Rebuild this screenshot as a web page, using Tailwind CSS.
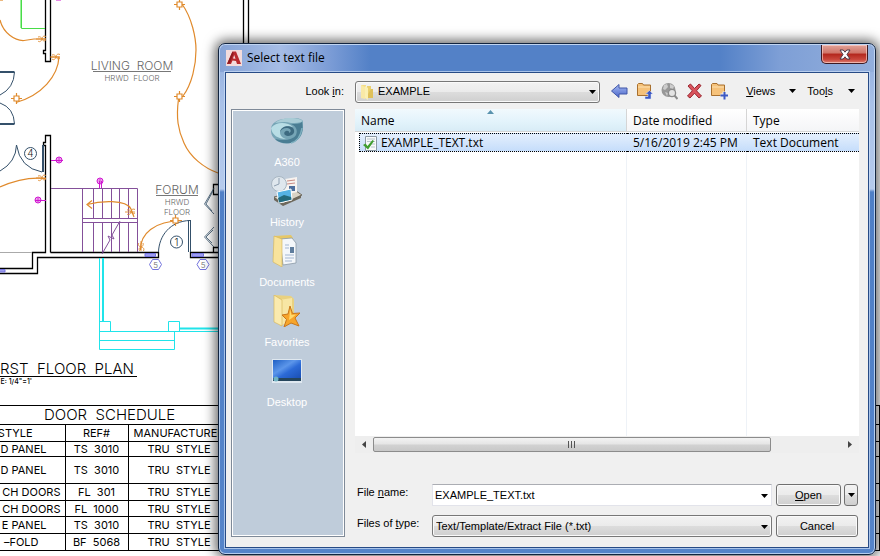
<!DOCTYPE html>
<html lang="en">
<head>
<meta charset="utf-8">
<title>Select text file</title>
<script src="https://cdn.jsdelivr.net/npm/@tailwindcss/browser@4"></script>
</head>
<body class="bg-white">
<div class="relative min-h-screen overflow-hidden">

  <!-- Drawing behind the dialog -->
  <main class="font-['Inter',sans-serif] font-light text-black">
    <svg class="block h-[405px] w-[880px] max-w-none" viewBox="0 0 880 405" fill="none" stroke-width="1" role="img" aria-label="First floor plan">
      <defs>
        <g id="lamp"><path d="M-2.500-2.500H2.500V2.500H-2.500Z" fill="#fff"/><path d="M-5.500 0H-2.500M2.500 0H5.500M0-5.500V-2.500M0 2.500V5.500"/></g>
        <g id="sw"><path d="M4-2.500C1-4 0-1 0 0S-2 4-4 2M-4-2C-2-3 0-1 0 0S2 3 4 1M-6 0H4" stroke-width=".9"/></g>
        <g id="outlet"><circle r="3"/><path d="M-3-1H3M-3 1H3M0-3V3" stroke-width=".8"/></g>
      </defs>
      <!-- walls -->
      <g stroke="#000" stroke-width="1.300">
        <path d="M45.500 0V50.500H43.500V53.500H45.500V61.500H50.500V0"/>
        <path d="M243.500 0V44M248.500 0V44"/>
        <path d="M50.500 252.500V135.500H45.500V142.500H43.500V145.500H45.500V252.500H32.500V268.500H0M50.500 252.500H158.500V257.500H37.500V273.500H0M218 252.500H190.500V257.500H218"/>
        <path d="M218 184.500H213.500V194.500H218M213.500 252V247.500H218"/>
      </g>
      <path d="M0 252.500H32" stroke="#aaa"/>
      <!-- windows and tags -->
      <g stroke="#7373dd">
        <path d="M145 253.500H155.500V256.500H145ZM192 253.500H203.500V256.500H192ZM0 269.500H5V272H0" fill="#9d9df0"/>
        <path d="M149.500 264.500L152.500 259.500H158.500L161.500 264.500L158.500 269.500H152.500ZM197 264.500L200 259.500H206L209 264.500L206 269.500H200Z"/>
      </g>
      <!-- furniture -->
      <path d="M21.500 0V28.500H45" stroke="#48dc48"/><path d="M20.500 0V28" stroke="#9df09d"/>
      <!-- doors -->
      <g stroke="#34506a">
        <path d="M0 72H14.500M0 124H14.500" stroke-width="1.800"/>
        <path d="M14.500 72Q14 88 0 95M0 103Q14 108 14.500 124M16.500 145Q16 162 0 171M16.500 145Q20 168 42 172M43.500 145V172"/>
        <path d="M42.500 145V172M158.500 252C159 236 170 221 190 220.500M188.500 220V252M190.500 220V252"/>
        <path d="M214 188L204.500 204L214 214M214 227L204.500 237L214 247M213 191L206 204L212 211M213 230L206 237L212 243" stroke-width=".8"/>
        <circle cx="30.500" cy="153.500" r="6"/><circle cx="176.500" cy="242" r="6"/>
      </g>
      <!-- stairs -->
      <path d="M51 188.500H137.500V252M82.500 188V252M93.500 188V218M93.500 222V252M102.500 188V218M102.500 222V252M111.500 188V218M111.500 222V252M119.500 188V218M119.500 222V252M128.500 188V218M128.500 222V252M82 218.500H137M82 222.500H137M102 254L110 240L108 236L114 239L112 235L120 221" stroke="#84509a"/>
      <!-- outlets -->
      <g stroke="#d016d0">
        <use href="#outlet" x="59" y="160"/><path d="M51 160.500H63"/>
        <use href="#outlet" x="38" y="200"/><path d="M35 200.500H46"/>
        <use href="#outlet" x="100" y="181"/><path d="M99.500 181V188M101.500 181V188"/>
        <path d="M56 0H61"/>
      </g>
      <!-- wiring -->
      <g stroke="#e08a2c" stroke-width="1.200">
        <path d="M0 20C3 33 15 41 24 40.500L34 39H46M51 57H59C58 76 42 95 16 102.500"/>
        <path d="M0 187Q24 176 46 178.500M182 4C192 18 196 38 196 50C196 65 192 84 183 96"/>
        <path d="M178.500 99C176 118 178 130 184 143C190 157 204 168 218 173"/>
        <path d="M92 200.500L87 204.500L92 208.500M87 204.500C100 201 126 199 131 209L134 217M140.500 250C140 234 154 221 182 220.500"/>
        <use href="#sw" x="42" y="39"/><use href="#sw" x="56" y="57"/><use href="#sw" x="42" y="178"/>
        <use href="#sw" x="131" y="212"/><use href="#sw" x="0" y="0" transform="translate(141 247) rotate(90)"/>
        <use href="#lamp" x="16.500" y="98.500"/><use href="#lamp" x="179.500" y="4.500"/><use href="#lamp" x="179.500" y="96.500"/><use href="#lamp" x="175.500" y="220.500"/>
        <path d="M0 0H3"/>
      </g>
      <!-- porch -->
      <g stroke="#20e4ea">
        <path d="M99.500 258V349.500H174.500V331M99 331.500H218M99 340.500H174M99.500 321.500H110.500V331M168.500 331V321.500H179.500V331"/>
        <path d="M103 258V321M180 328.500H218" stroke-width="2"/>
      </g>
      <g fill="#666" font-size="12" text-anchor="middle">
        <text x="132" y="70">LIVING&#160; ROOM</text><text x="132" y="81" font-size="8">HRWD&#160; FLOOR</text>
        <text x="177" y="194">FORUM</text><text x="177" y="205" font-size="8">HRWD</text><text x="177" y="215" font-size="8">FLOOR</text>
        <g fill="#222"><text x="30.500" y="157" font-size="10">4</text><text x="176.500" y="246" font-size="10">1</text></g>
        <g font-size="8"><text x="155.500" y="268">5</text><text x="203" y="268">5</text></g>
      </g>
      <path d="M93 71.500H171M156 195.500H198" stroke="#777"/>
      <g fill="#000">
        <text x="134" y="374" font-size="15" text-anchor="end">RST&#160; FLOOR&#160; PLAN</text>
        <text x="32" y="384" font-size="7" font-weight="500" text-anchor="end">E: 1/4"=1'</text>
      </g>
      <path d="M0 376.500H137" stroke="#000"/>
    </svg>

    <table class="w-full table-fixed border-collapse text-center text-[11px] leading-[14px] font-normal whitespace-nowrap [&_td]:border [&_td]:border-black [&_td]:p-0 [&_th]:border [&_th]:border-black [&_th]:p-0 [&_th]:font-normal [&_tr>*:first-child]:border-l-0">
      <colgroup><col class="w-[65px]"><col class="w-[63px]"><col class="w-[102px]"><col></colgroup>
      <thead>
        <tr class="h-[19px]"><th colspan="4" class="text-left"><span class="pl-[44px] text-[15px] font-light">DOOR&nbsp; SCHEDULE</span></th></tr>
        <tr class="h-[17px]"><th><div class="flex justify-end pr-[32px]">STYLE</div></th><th>REF#</th><th>MANUFACTURER</th><th></th></tr>
      </thead>
      <tbody>
        <tr class="h-[15px]"><td><div class="flex justify-end pr-[18px]">D PANEL</div></td><td>TS&nbsp; 3010</td><td>TRU&nbsp; STYLE</td><td></td></tr>
        <tr class="h-[27px]"><td><div class="flex justify-end pr-[18px]">D PANEL</div></td><td>TS&nbsp; 3010</td><td>TRU&nbsp; STYLE</td><td></td></tr>
        <tr class="h-[17px]"><td><div class="flex justify-end pr-[4px]">CH DOORS</div></td><td>FL&nbsp; 301</td><td>TRU&nbsp; STYLE</td><td></td></tr>
        <tr class="h-[16px]"><td><div class="flex justify-end pr-[4px]">CH DOORS</div></td><td>FL&nbsp; 1000</td><td>TRU&nbsp; STYLE</td><td></td></tr>
        <tr class="h-[17px]"><td><div class="flex justify-end pr-[18px]">E PANEL</div></td><td>TS&nbsp; 3010</td><td>TRU&nbsp; STYLE</td><td></td></tr>
        <tr class="h-[17px]"><td><div class="flex justify-end pr-[26px]">–FOLD</div></td><td>BF&nbsp; 5068</td><td>TRU&nbsp; STYLE</td><td></td></tr>
      </tbody>
    </table>
  </main>

  <!-- Dialog window -->
  <section role="dialog" aria-labelledby="dialog-title" class="absolute top-[43px] right-[4px] bottom-px left-[218px] flex flex-col rounded-[7px] border border-[#12243f] bg-[linear-gradient(180deg,#8eabdc_0,#a9c1e8_60px,#b5caec_145px,#4f7fc6_148px,#5584c9_100%)] px-[6px] pb-[6px] font-['Liberation_Sans',sans-serif] text-[11px] leading-4 text-black shadow-[0_0_12px_3px_rgba(0,0,0,0.6),inset_0_0_0_1px_rgba(205,224,248,0.8)]">
    <header class="-mx-[5px] mt-px flex h-[27px] shrink-0 items-start rounded-t-[6px] bg-[linear-gradient(90deg,#86a3d6_0,#a6bde6_60px,#7b9cd6_110px,#5381c7_150px,#5381c7_500px,#7e9fd6_560px,#93afdc_100%)] pl-[6px]">
      <svg class="mt-[5px] size-4" viewBox="0 0 16 16" aria-hidden="true"><rect width="16" height="16" fill="#f3dcdc"/><path d="M1 14L6.500 1.500H10L15 14H11L10 11L6.500 10.500L5 14Z" fill="#b92a2e"/><path d="M7 8.500L8.200 5L9.500 8.800Z" fill="#f6dede"/><path d="M1 14L6.500 1.500L7.500 3.500L4 13Z" fill="#8f1b20"/></svg>
      <h1 id="dialog-title" class="mt-[5px] ml-[5px] font-['Open_Sans',sans-serif] text-[12px]">Select text file</h1>
      <button aria-label="Close" class="mr-[6px] ml-auto flex h-[19px] w-[47px] items-center justify-center rounded-b-[5px] border border-t-0 border-[#3d1a22] bg-[linear-gradient(180deg,#e2a298_0,#cf7468_45%,#b3261c_50%,#c9473c_80%,#dd8072_100%)] shadow-[inset_0_0_0_1px_rgba(255,220,215,0.6)]">
        <svg class="h-[11px] w-3" viewBox="0 0 12 11" aria-hidden="true"><path d="M1 1H4.200L6 3.200L7.800 1H11L8 5.500L11 10H7.800L6 7.800L4.200 10H1L4 5.500Z" fill="#fff" stroke="#4a3a48"/></svg>
      </button>
    </header>

    <div class="flex min-h-0 flex-1 flex-col border border-[#274b86] bg-[#f0f0f0] pr-[9px] pb-[10px] pl-[5px] shadow-[0_0_0_1px_rgba(205,224,248,0.7)]">
      <!-- Toolbar -->
      <div class="mt-[8px] flex h-[22px] shrink-0 items-center">
        <label for="look-in" class="w-[113px] shrink-0 pb-[3px] text-right">Look <u>i</u>n:</label>
        <div class="relative ml-[11px] h-[22px] w-[245px] shrink-0">
          <select id="look-in" class="h-full w-full appearance-none rounded-[3px] border border-[#777] bg-[linear-gradient(180deg,#f2f2f2_0,#ebebeb_48%,#dcdcdc_52%,#cfcfcf_100%)] pb-[2px] pl-[22px] shadow-[inset_0_0_0_1px_#fafafa]"><option>EXAMPLE</option></select>
          <svg class="pointer-events-none absolute top-[3px] left-[4px] size-4" viewBox="0 0 16 16" aria-hidden="true"><path d="M2 1H7V14H2Z" fill="#f3dc86"/><path d="M8 2H12V13H8Z" fill="#ead06e"/><path d="M6 2L9 4V16L6 14Z" fill="#fbf0b4"/><path d="M12 5H14V14H9V10Z" fill="#dfc05a"/><path d="M2 1V14L6 15V3Z" fill="#f9e9a6"/></svg>
          <svg class="pointer-events-none absolute top-[9px] right-[4px] h-1 w-[7px]" viewBox="0 0 7 4" aria-hidden="true"><path d="M0 0H7L3.500 4Z"/></svg>
        </div>
        <div class="ml-[11px] flex shrink-0 items-center gap-[8px] pb-[3px]">
          <button aria-label="Back" class="h-[18px] w-[17px]"><svg viewBox="0 0 17 18"><defs><linearGradient id="bl" x1="0" y1="0" x2="0" y2="1"><stop offset="0" stop-color="#a6bbf3"/><stop offset="1" stop-color="#4b66c9"/></linearGradient></defs><path d="M.500 9L8 2.500V6H16V12H8V15.500Z" fill="url(#bl)" stroke="#4157a8"/></svg></button>
          <button aria-label="Up one level" class="h-[18px] w-[17px]"><svg viewBox="0 0 17 18"><path d="M1.500 2.500L2.500 1.500H6.500L7.500 3H14.500V13.500H1.500Z" fill="#f6c27a" stroke="#a8702f"/><path d="M2 5H14" stroke="#fbe0b0"/><path d="M9 17V14.500H12V12H9.500L13.500 8.500L17 12H15V17Z" fill="#3d59c4" stroke="#dfe5fa" stroke-width=".5"/></svg></button>
          <button aria-label="Search the Web" class="h-[18px] w-[17px]"><svg viewBox="0 0 17 18"><circle cx="7.500" cy="8" r="7" fill="#989898"/><path d="M3 3L6 2L7 5L4 8L2 7ZM9 2L13 4L12 7L9 6ZM4 10L7 11L6 14Z" fill="#cdcdcd"/><circle cx="11" cy="11" r="3.600" fill="#e4e4e4" stroke="#8a8a8a" stroke-width="1.300"/><path d="M13.500 13.500L16.500 17" stroke="#8a8a8a" stroke-width="2"/></svg></button>
          <button aria-label="Delete" class="h-[18px] w-[17px]"><svg viewBox="0 0 17 18"><path d="M2 4L4.500 2L8.500 6.500L13 2L15 3.500L10.500 8.800L15.500 14L13 16L8.500 11.200L4 16L1.500 14L6.300 8.800Z" fill="#d9535c" stroke="#9a2730"/></svg></button>
          <button aria-label="Create New Folder" class="h-[18px] w-[17px]"><svg viewBox="0 0 17 18"><path d="M.500 2.500L1.500 1.500H6L7 3H13.500V13.500H.500Z" fill="#f6c27a" stroke="#a8702f"/><path d="M1 5H13" stroke="#fbe0b0"/><path d="M13.500 9.500V17.500M9.500 13.500H17" stroke="#f0f0f0" stroke-width="4"/><path d="M13.500 10V17.500M9.500 13.500H17" stroke="#3d59c4" stroke-width="2"/></svg></button>
        </div>
        <div class="ml-auto flex items-center pr-[4px] pb-[3px]">
          <button class="flex items-center gap-[14px]"><span><u>V</u>iews</span><svg class="h-1 w-[7px]" viewBox="0 0 7 4" aria-hidden="true"><path d="M0 0H7L3.500 4Z"/></svg></button>
          <button class="ml-[11px] flex items-center gap-[15px]"><span>Too<u>l</u>s</span><svg class="h-1 w-[7px]" viewBox="0 0 7 4" aria-hidden="true"><path d="M0 0H7L3.500 4Z"/></svg></button>
        </div>
      </div>

      <div class="mt-[6px] flex min-h-0 flex-1 gap-[10px]">
        <!-- Places -->
        <nav aria-label="Places" class="flex w-[114px] shrink-0 flex-col border border-[#7f8a98] bg-[#bfccda] pt-[3px] text-center text-white shadow-[inset_0_0_0_1px_#fff]">
          <a href="#a360" class="flex h-[60px] shrink-0 flex-col items-center gap-[7px] pt-[2px] pr-[2px]">
            <svg class="size-8 shrink-0" viewBox="0 0 32 32" aria-hidden="true"><path d="M0 13C2 4 14 3 21 4C26 2 31 4 32 6C33 15 31 22 25 26C18 30 8 29 4 24C0 21 0 17 0 13Z" fill="#76a5b6"/><path d="M4 8C10 3 24 1 32 6C29 8 25 8 20 8C13 6 7 8 4 8Z" fill="#a9ccd6"/><path d="M0 13C5 6 17 7 22 12C16 10 10 12 9 17C9 21 12 23 15 24C7 24 1 20 0 13Z" fill="#b8dde5"/><path d="M31 7C33 17 30 25 20 28C12 29 7 27 4 24C13 26 22 25 25 20C27 15 25 11 20 9C25 9 29 9 31 7Z" fill="#4a7d93"/><path d="M9 17C10 11 18 10 22 13C25 17 22 21 17 21C13 21 12 17 15 16C17 15 19 17 18 18C21 17 20 13 16 13C12 13 10 15 9 17Z" fill="#3d6a80"/><path d="M20 28C27 26 30 20 31 13" fill="none" stroke="#7fb0c0" stroke-width="1.500"/></svg>
            <span>A360</span></a>
          <a href="#history" class="flex h-[60px] shrink-0 flex-col items-center gap-[7px] pt-[2px] pr-[2px]">
            <svg class="size-8 shrink-0" viewBox="0 0 32 32" aria-hidden="true"><path d="M3 22L25 16L31 20L12 30Z" fill="#d9d3c6" stroke="#6f6a60"/><path d="M12 28L30 20V23L12 31L3 25V22Z" fill="#6e685c"/><path d="M14 4L26 2V17L14 20Z" fill="#f7f3f0"/><path d="M16 6L24 5M16 9L24 8" stroke="#c98c86"/><path d="M18 11H24V16H18Z" fill="#4d6e9d"/><circle cx="8" cy="9" r="7.500" fill="#dfe7ee" stroke="#a8b6c2"/><path d="M8 3V9L3 11" fill="none" stroke="#8fa0b2"/><path d="M6 17L20 14L21 25L8 28Z" fill="#55b2e4" stroke="#fff"/><path d="M7 23L13 20L20 22L20.500 24.500L8 27.500Z" fill="#246a7c"/></svg>
            <span>History</span></a>
          <a href="#documents" class="flex h-[60px] shrink-0 flex-col items-center gap-[7px] pt-[2px] pr-[2px]">
            <svg class="size-8 shrink-0" viewBox="0 0 32 32" aria-hidden="true"><path d="M3 1L20 0L22 3V26L9 30Z" fill="#e6c766"/><path d="M9 4L21 3L25 8V28L12 30Z" fill="#f4f7fa" stroke="#8a99a6" stroke-width=".8"/><path d="M14 10H18M14 13H18M14 20H23M14 23H23M14 26H21" stroke="#a3b6d1"/><path d="M19 12H23V18H19Z" fill="#5f7d9d"/><path d="M3 1L11 4V32L2 27Z" fill="#f8e39c" stroke="#d3b152" stroke-width=".6"/></svg>
            <span>Documents</span></a>
          <a href="#favorites" class="flex h-[60px] shrink-0 flex-col items-center gap-[7px] pt-[2px] pr-[2px]">
            <svg class="size-8 shrink-0" viewBox="0 0 32 32" aria-hidden="true"><path d="M3 0L20 1L23 4V25L9 31Z" fill="#e9d180"/><path d="M8 5L21 3V26L11 30Z" fill="#f7e6a4"/><path d="M3 0L11 5V31L3 27Z" fill="#faeaae" stroke="#d3b152" stroke-width=".6"/><path d="M19 11L21.500 18.500L29 18L24 23L28 31L20 28L13 32L15.500 24.500L11 20L17 19Z" fill="#f7a52a" stroke="#c8761a"/><path d="M19 14L20.500 20L25 19.500L21 23L18 25L18.500 21Z" fill="#ffd96c"/></svg>
            <span>Favorites</span></a>
          <a href="#desktop" class="flex h-[60px] shrink-0 flex-col items-center gap-[7px] pt-[2px] pr-[2px]">
            <svg class="size-8 shrink-0" viewBox="0 0 32 32" aria-hidden="true"><defs><linearGradient id="dk" x1="0" y1="0" x2="1" y2="1"><stop offset="0" stop-color="#1e5fc4"/><stop offset=".4" stop-color="#5c96ea"/><stop offset=".6" stop-color="#2c6ad6"/><stop offset="1" stop-color="#1a4fb4"/></linearGradient></defs><rect x="1" y="4" width="30" height="24" fill="#dfe8f0"/><rect x="2" y="5" width="28" height="18" fill="url(#dk)"/><rect x="2" y="23" width="28" height="3" fill="#25455c"/><circle cx="5" cy="24" r="2.500" fill="#6fb3c4"/></svg>
            <span>Desktop</span></a>
        </nav>

        <div class="flex min-w-0 flex-1 flex-col">
          <!-- File list -->
          <div class="min-h-0 flex-1 bg-white font-['Open_Sans',sans-serif] text-[12px]">
            <table class="h-full w-full table-fixed border-separate border-spacing-0 text-left whitespace-nowrap">
              <colgroup><col class="w-[272px]"><col class="w-[120px]"><col></colgroup>
              <thead>
                <tr class="h-[23px] [&>th]:border-b [&>th]:border-[#d5d5d5] [&>th]:p-0 [&>th]:pt-[2px] [&>th]:font-normal">
                  <th class="relative border-r border-r-[#a8d8eb] bg-[linear-gradient(180deg,#f1f9fd_0,#e2f3fb_60%,#d8ecf6_100%)]"><span class="pl-[6px]">Name</span><svg class="absolute top-px left-[132px] h-1 w-[7px]" viewBox="0 0 7 4" aria-hidden="true"><path d="M0 4L3.500 0L7 4Z" fill="#5a93ae"/></svg></th>
                  <th class="border-r border-r-[#e3e8ee] bg-linear-to-b from-white to-[#f4f5f7]"><span class="pl-[6px]">Date modified</span></th>
                  <th class="bg-linear-to-b from-white to-[#f4f5f7]"><span class="pl-[6px]">Type</span></th>
                </tr>
              </thead>
              <tbody>
                <tr class="h-px"><td class="p-0"></td><td class="p-0"></td><td class="p-0"></td></tr>
                <tr class="h-[19px] [&>td]:border-y [&>td]:border-dotted [&>td]:border-y-black [&>td]:p-0">
                  <td class="border-y-0! pl-[4px]!"><div class="flex h-[19px] items-center border border-r-0 border-dotted border-black bg-linear-to-b from-[#e4effd] to-[#c5ddfb] pl-[2px]">
                    <svg class="mr-[3px] size-4 shrink-0" viewBox="0 0 16 16" aria-hidden="true"><path d="M3.500 1.500H14.500V15.500H3.500Z" fill="#f8fafb" stroke="#8c9aa5"/><path d="M5 4H13M5 6.500H13M8 9H13M9 12H13" stroke="#b8c4cc"/><path d="M1 10L3.500 8.500L5.500 11L10.500 5L12 6L6 14.500Z" fill="#3f9e2f"/></svg><span>EXAMPLE_TEXT.txt</span></div></td>
                  <td class="bg-linear-to-b from-[#e4effd] to-[#c5ddfb]"><span class="pl-[6px]">5/16/2019 2:45 PM</span></td>
                  <td class="bg-linear-to-b from-[#e4effd] to-[#c5ddfb]"><span class="pl-[6px]">Text Document</span></td>
                </tr>
                <tr><td class="border-r border-[#eef2f7]"></td><td class="border-r border-[#eef2f7]"></td><td></td></tr>
              </tbody>
            </table>
          </div>
          <!-- Horizontal scroll bar -->
          <div class="flex h-[17px] shrink-0 items-center bg-[#eeeeee]">
            <button aria-label="Scroll left" class="flex h-full w-[18px] items-center justify-center"><svg class="h-[7px] w-1" viewBox="0 0 4 7" aria-hidden="true"><path d="M4 0V7L0 3.500Z" fill="#444"/></svg></button>
            <div class="flex h-full min-w-0 flex-1">
              <div class="mt-px flex h-[15px] w-[85%] items-center justify-center gap-[2px] rounded-[2px] border border-[#8c8c8c] bg-[linear-gradient(180deg,#f3f3f3_0,#e5e5e5_48%,#d2d2d2_52%,#c8c8c8_100%)]"><i class="h-[7px] w-px bg-[#555]"></i><i class="h-[7px] w-px bg-[#555]"></i><i class="h-[7px] w-px bg-[#555]"></i></div>
            </div>
            <button aria-label="Scroll right" class="flex h-full w-[18px] items-center justify-center"><svg class="h-[7px] w-1" viewBox="0 0 4 7" aria-hidden="true"><path d="M0 0V7L4 3.500Z" fill="#444"/></svg></button>
          </div>

          <!-- File name and type -->
          <div class="mt-[31px] flex h-[22px] shrink-0">
            <label for="file-name" class="w-[77px] shrink-0 pl-[2px]">File <u>n</u>ame:</label>
            <div class="relative min-w-0 flex-1">
              <input id="file-name" value="EXAMPLE_TEXT.txt" class="h-full w-full border border-[#e2e3ea] border-t-[#abadb3] bg-white pl-[2px]">
              <svg class="pointer-events-none absolute top-[10px] right-[4px] h-1 w-[7px]" viewBox="0 0 7 4" aria-hidden="true"><path d="M0 0H7L3.500 4Z"/></svg>
            </div>
            <button class="ml-[4px] w-[65px] shrink-0 rounded-[3px] border border-[#707070] bg-[linear-gradient(180deg,#f2f2f2_0,#ebebeb_48%,#dddddd_52%,#cfcfcf_100%)] shadow-[inset_0_0_0_1px_#fafafa]"><u>O</u>pen</button>
            <button aria-label="Open options" class="mr-px ml-[3px] flex w-[14px] shrink-0 items-center justify-center rounded-[3px] border border-[#707070] bg-[linear-gradient(180deg,#f2f2f2_0,#ebebeb_48%,#dddddd_52%,#cfcfcf_100%)]"><svg class="h-1 w-[7px] shrink-0" viewBox="0 0 7 4" aria-hidden="true"><path d="M0 0H7L3.500 4Z"/></svg></button>
          </div>
          <div class="mt-[9px] flex h-[22px] shrink-0">
            <label for="file-type" class="w-[77px] shrink-0 pl-[2px]">Files of <u>t</u>ype:</label>
            <div class="relative min-w-0 flex-1">
              <select id="file-type" class="h-full w-full appearance-none rounded-[3px] border border-[#777] bg-[linear-gradient(180deg,#f2f2f2_0,#ebebeb_48%,#dcdcdc_52%,#cfcfcf_100%)] pl-[3px] shadow-[inset_0_0_0_1px_#fafafa]"><option>Text/Template/Extract File (*.txt)</option></select>
              <svg class="pointer-events-none absolute top-[10px] right-[4px] h-1 w-[7px]" viewBox="0 0 7 4" aria-hidden="true"><path d="M0 0H7L3.500 4Z"/></svg>
            </div>
            <button class="mr-px ml-[4px] w-[82px] shrink-0 rounded-[3px] border border-[#707070] bg-[linear-gradient(180deg,#f2f2f2_0,#ebebeb_48%,#dddddd_52%,#cfcfcf_100%)] shadow-[inset_0_0_0_1px_#fafafa]">Cancel</button>
          </div>
        </div>
      </div>
    </div>
  </section>
</div>
</body>
</html>
